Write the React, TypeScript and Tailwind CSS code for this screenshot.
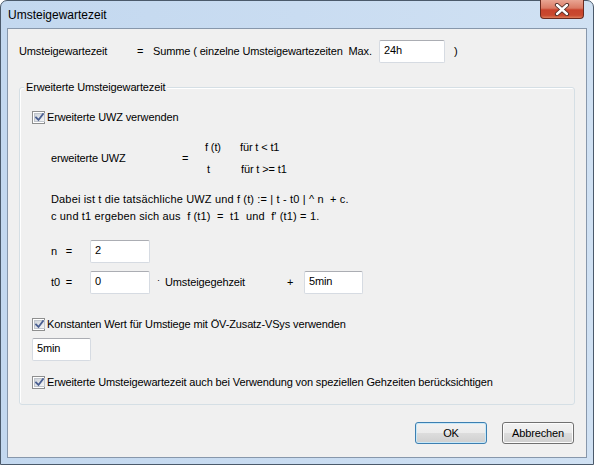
import React from "react";

function Check() {
  return (
    <span className="w-[13px] h-[13px] shrink-0 border border-[#8e8f8f] bg-white p-[1px] flex">
      <span className="flex-1 flex items-center justify-center bg-gradient-to-br from-[#cfd4da] to-[#f4f5f6] border border-[#c0c5cc]">
        <svg width="9" height="9" viewBox="0 0 9 9">
          <path d="M1 4.5 L3.5 7 L8 1" fill="none" stroke="#4a5f92" strokeWidth="1.8" strokeLinecap="square" />
        </svg>
      </span>
    </span>
  );
}

function Field({ value, w }: { value: string; w: string }) {
  return (
    <div
      className={`${w} h-[23px] shrink-0 bg-white border border-[#d6dbe2] border-t-[#abadb3] rounded-[2px] flex items-center pl-[4px] pb-[3px] text-[11px]`}
    >
      {value}
    </div>
  );
}

export default function App() {
  return (
    <div className="w-[594px] h-[465px] flex flex-col border border-[#4b5a6b] rounded-t-[7px] bg-gradient-to-r from-[#c3d8ef] via-[#c9dcf1] to-[#d0e1f3] font-['Liberation_Sans',Arial,sans-serif] text-black text-[11px]">
      <div className="h-[27px] relative shrink-0">
        <span className="absolute left-[7px] top-[7px] text-[12px] leading-[14px]">Umsteigewartezeit</span>
        <div className="absolute right-[9px] top-[-1px] w-[44px] h-[19px] rounded-b-[4px] border border-[#6b2a1f] border-t-0 bg-[linear-gradient(#e9a593_0%,#da7a64_45%,#c8432c_55%,#c9492f_85%,#dd7c5a_100%)] flex items-center justify-center">
          <svg width="16" height="13" viewBox="0 0 16 13">
            <path d="M3 2 L13 11 M13 2 L3 11" stroke="#4b2a24" strokeWidth="4.2" strokeLinecap="round" />
            <path d="M3 2 L13 11 M13 2 L3 11" stroke="#ffffff" strokeWidth="2.4" strokeLinecap="round" />
          </svg>
        </div>
      </div>
      <div className="flex-1 mx-[6px] mb-[6px] border border-[#8797ab] bg-[#f0f0f0] flex flex-col tracking-[-0.13px]">
        <div className="flex items-center mt-[11px] pl-[11px] h-[23px]">
          <span className="w-[118px]">Umsteigewartezeit</span>
          <span className="w-[16px]">=</span>
          <span className="w-[226px] whitespace-pre">Summe ( einzelne Umsteigewartezeiten  Max.</span>
          <Field value="24h" w="w-[66px]" />
          <span className="ml-[9px]">)</span>
        </div>

        <div className="relative mt-[24px] ml-[11px] w-[556px] h-[318px] border border-[#d5dfe5] rounded-[3px] shadow-[inset_1px_1px_0_#ffffff] flex flex-col">
          <span className="absolute left-[4px] top-[-8px] px-[2px] bg-[#f0f0f0] leading-[14px]">Erweiterte Umsteigewartezeit</span>

          <div className="flex items-center mt-[22px] ml-[12px] h-[15px] gap-[2px]">
            <Check />
            <span>Erweiterte UWZ verwenden</span>
          </div>

          <div className="flex items-center mt-[11px] ml-[31px] h-[44px]">
            <span className="w-[131px]">erweiterte UWZ</span>
            <span className="w-[23px]">=</span>
            <div className="flex flex-col">
              <div className="flex items-center h-[22px]">
                <span className="w-[35px]">f (t)</span>
                <span>für t &lt; t1</span>
              </div>
              <div className="flex items-center h-[22px]">
                <span className="w-[36px] pl-[2px]">t</span>
                <span>für t &gt;= t1</span>
              </div>
            </div>
          </div>

          <div className="mt-[11px] ml-[31px] leading-[17px] whitespace-pre tracking-[0.15px]">
            <div>Dabei ist t die tatsächliche UWZ und f (t) := | t - t0 | ^ n  + c.</div>
            <div>c und t1 ergeben sich aus  f (t1)  =  t1  und  f' (t1) = 1.</div>
          </div>

          <div className="flex items-center mt-[15px] ml-[31px] h-[23px]">
            <span className="w-[39px] whitespace-pre">n   =</span>
            <Field value="2" w="w-[60px]" />
          </div>

          <div className="flex items-center mt-[8px] ml-[31px] h-[23px]">
            <span className="w-[39px] whitespace-pre">t0  =</span>
            <Field value="0" w="w-[60px]" />
            <span className="ml-[7px] w-[8px] text-[9px] -mt-[3px]">·</span>
            <span className="w-[122px]">Umsteigegehzeit</span>
            <span className="w-[17px]">+</span>
            <Field value="5min" w="w-[59px]" />
          </div>

          <div className="flex items-center mt-[23px] ml-[12px] h-[15px] gap-[2px]">
            <Check />
            <span>Konstanten Wert für Umstiege mit ÖV-Zusatz-VSys verwenden</span>
          </div>

          <div className="mt-[6px] ml-[12px]">
            <Field value="5min" w="w-[59px]" />
          </div>

          <div className="flex items-center mt-[14px] ml-[12px] h-[15px] gap-[2px]">
            <Check />
            <span>Erweiterte Umsteigewartezeit auch bei Verwendung von speziellen Gehzeiten berücksichtigen</span>
          </div>
        </div>

        <div className="flex justify-end gap-[15px] mt-[17px] pr-[12px]">
          <button className="w-[72px] h-[22px] rounded-[3px] border border-[#3c7fb1] shadow-[inset_0_0_0_1px_#c8e8f8] bg-[linear-gradient(#f2f2f2_0%,#ebebeb_50%,#dddddd_50%,#cfcfcf_100%)] text-[11px] leading-[14px]">
            OK
          </button>
          <button className="w-[72px] h-[22px] rounded-[3px] border border-[#707070] shadow-[inset_0_0_0_1px_#fcfcfc] bg-[linear-gradient(#f2f2f2_0%,#ebebeb_50%,#dddddd_50%,#cfcfcf_100%)] text-[11px] leading-[14px]">
            Abbrechen
          </button>
        </div>
      </div>
    </div>
  );
}
